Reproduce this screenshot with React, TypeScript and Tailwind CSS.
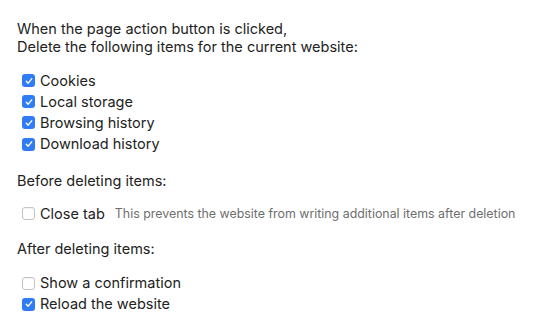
import { useState } from "react";

type Item = { key: string; label: string; note?: string };

const DELETE_ITEMS: Item[] = [
  { key: "cookies", label: "Cookies" },
  { key: "localStorage", label: "Local storage" },
  { key: "history", label: "Browsing history" },
  { key: "downloads", label: "Download history" },
];

function Box({ checked }: { checked: boolean }) {
  return checked ? (
    <span className="flex h-[13px] w-[13px] shrink-0 items-center justify-center rounded-[3px] bg-[#2f7cf6]">
      <svg viewBox="0 0 12 12" className="h-[10px] w-[10px]" fill="none">
        <path d="M2.8 6.3 5 8.6 9.2 3.4" stroke="white" strokeWidth="1.7" strokeLinecap="round" strokeLinejoin="round" />
      </svg>
    </span>
  ) : (
    <span className="h-[13px] w-[13px] shrink-0 rounded-[3px] border border-[#c4c4c4] bg-white shadow-[inset_0_0.5px_1px_rgba(0,0,0,0.08)]" />
  );
}

function Option({ item, checked, onToggle }: { item: Item; checked: boolean; onToggle: () => void }) {
  return (
    <label className="flex h-[21.2px] cursor-default items-center gap-[5px] pl-[22px]" onClick={onToggle}>
      <Box checked={checked} />
      <span className="text-[14.5px] text-[#222]">{item.label}</span>
      {item.note && <span className="ml-[5px] text-[12.4px] text-[#6e6e6e]">{item.note}</span>}
    </label>
  );
}

export default function App() {
  const [checks, setChecks] = useState<Record<string, boolean>>({
    cookies: true,
    localStorage: true,
    history: true,
    downloads: true,
    closeTab: false,
    confirm: false,
    reload: true,
  });
  const toggle = (key: string) => setChecks((c) => ({ ...c, [key]: !c[key] }));

  return (
    <div className="min-h-[333px] bg-white pl-[17px] pt-[20px] font-['Inter',sans-serif] text-[14.5px] leading-[17.5px] text-[#222]">
      <p>
        When the page action button is clicked,
        <br />
        Delete the following items for the current website:
      </p>
      <div className="mt-[15px] -ml-[17px]">
        {DELETE_ITEMS.map((item) => (
          <Option key={item.key} item={item} checked={checks[item.key]} onToggle={() => toggle(item.key)} />
        ))}
      </div>
      <p className="mt-[17px]">Before deleting items:</p>
      <div className="mt-[14px] -ml-[17px]">
        <Option
          item={{ key: "closeTab", label: "Close tab", note: "This prevents the website from writing additional items after deletion" }}
          checked={checks.closeTab}
          onToggle={() => toggle("closeTab")}
        />
      </div>
      <p className="mt-[16px]">After deleting items:</p>
      <div className="mt-[14.5px] -ml-[17px]">
        <Option item={{ key: "confirm", label: "Show a confirmation" }} checked={checks.confirm} onToggle={() => toggle("confirm")} />
        <Option item={{ key: "reload", label: "Reload the website" }} checked={checks.reload} onToggle={() => toggle("reload")} />
      </div>
    </div>
  );
}
